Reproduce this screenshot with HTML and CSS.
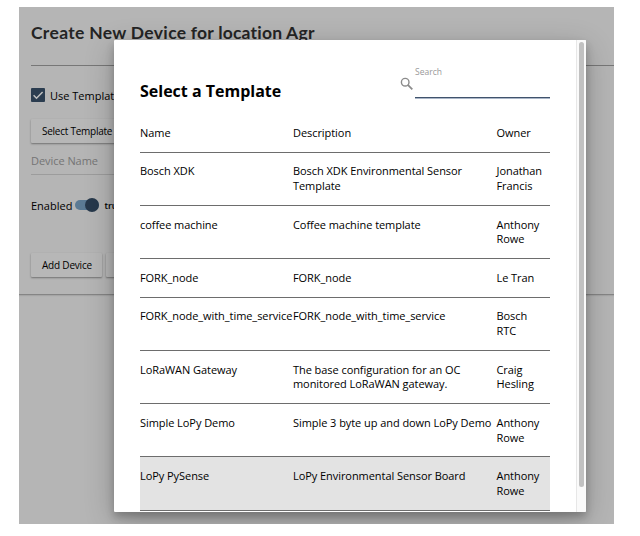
FILE: index.html
```html
<!DOCTYPE html>
<html lang="en">
<head>
<meta charset="utf-8">
<title>Create New Device</title>
<link rel="stylesheet" href="styles.css">
</head>
<body>
<div class="screen">
  <main class="page">
    <h1 class="page-title">Create New Device<span class="title-rest"> for location Agr</span></h1>
    <label class="check-row">
      <svg class="checkbox" viewBox="0 0 14 14"><rect width="14" height="14" rx="1" fill="#2b3d50"/><path d="M2.6 7.3 5.5 10.2 11.6 4" fill="none" stroke="#c0c0c0" stroke-width="1.5"/></svg>
      <span>Use Template</span>
    </label>
    <div class="buttons"><span class="button button-select">Select Template</span></div>
    <div class="field">Device Name</div>
    <div class="toggle-row">
      <span>Enabled</span>
      <span class="toggle"><span class="knob"></span></span>
      <span class="toggle-value">true</span>
    </div>
    <div class="buttons actions"><span class="button button-add">Add Device</span><span class="button button-cancel">Cancel</span></div>
  </main>
  <section class="dialog">
    <div class="content">
      <header class="dialog-header">
        <h2>Select a Template</h2>
        <div class="search">
          <svg class="search-icon" viewBox="0 0 14 14" fill="none" stroke="#8b8b8b"><circle cx="5.2" cy="5.2" r="3.8" stroke-width="1.4"/><path d="M8.1 8.1 12.3 12.3" stroke-width="1.8"/></svg>
          <div class="search-field">Search</div>
        </div>
      </header>
      <div class="row head"><span>Name</span><span>Description</span><span>Owner</span></div>
      <div class="row"><span>Bosch XDK</span><span>Bosch XDK Environmental Sensor Template</span><span>Jonathan Francis</span></div>
      <div class="row"><span>coffee machine</span><span>Coffee machine template</span><span>Anthony Rowe</span></div>
      <div class="row"><span>FORK_node</span><span>FORK_node</span><span>Le Tran</span></div>
      <div class="row"><span>FORK_node_with_time_service</span><span>FORK_node_with_time_service</span><span>Bosch<br>RTC</span></div>
      <div class="row"><span>LoRaWAN Gateway</span><span>The base configuration for an OC<br>monitored LoRaWAN gateway.</span><span>Craig Hesling</span></div>
      <div class="row"><span>Simple LoPy Demo</span><span class="single">Simple 3 byte up and down LoPy Demo</span><span>Anthony Rowe</span></div>
      <div class="row selected"><span>LoPy PySense</span><span>LoPy Environmental Sensor Board</span><span>Anthony Rowe</span></div>
    </div>
    <div class="scrollbar"><div class="thumb"></div></div>
  </section>
</div>
</body>
</html>
```

FILE: styles.css
```css
* { box-sizing: border-box; }
body {
  margin: 0;
  background: #fff;
  font: 11px/15px "Open Sans", "Noto Sans", sans-serif;
  color: #000;
  overflow: hidden;
}
.screen {
  position: relative;
  width: 595px;
  height: 517px;
  margin: 7px 0 0 19px;
  background: #b5b5b5;
  overflow: hidden;
}
.page {
  height: 288px;
  padding: 14px 0 0 12px;
  border-bottom: 1px solid #858585;
  box-shadow: 0 1px 1px #a5a5a5;
}
.page-title {
  margin: 0;
  height: 45px;
  border-bottom: 1px solid #777;
  font: 700 17.5px/24px Lato, sans-serif;
  letter-spacing: .32px;
  color: #242424;
  white-space: nowrap;
}
.title-rest { letter-spacing: .2px; }
.check-row {
  display: flex;
  align-items: center;
  gap: 5px;
  height: 18px;
  margin-top: 20px;
}
.checkbox { width: 14px; height: 14px; }
.buttons {
  display: flex;
  gap: 4px;
  margin-top: 15px;
}
.button {
  height: 24px;
  padding: 0 0 0 11px;
  border-radius: 1px;
  background: #b7b7b7;
  box-shadow: 0 1px 2px rgba(0, 0, 0, .38);
  font-size: 10px;
  letter-spacing: -.2px;
  line-height: 24px;
  white-space: nowrap;
}
.button-select { width: 100px; letter-spacing: -.25px; }
.button-add { width: 71px; }
.button-cancel { width: 71px; }
.field {
  width: 220px;
  height: 32px;
  padding-top: 10px;
  border-bottom: 1px solid #9c9c9c;
  color: #747474;
  letter-spacing: -.05px;
}
.toggle-row {
  display: flex;
  align-items: center;
  height: 18px;
  margin-top: 21px;
}
.toggle {
  display: flex;
  justify-content: flex-end;
  align-items: center;
  width: 24px;
  height: 10px;
  margin-left: 3px;
  border-radius: 5px;
  background: #5b7a94;
}
.knob {
  flex: none;
  width: 14px;
  height: 14px;
  border-radius: 50%;
  background: #26384b;
}
.toggle-value { margin-left: 5px; font-size: 9px; font-weight: 600; }
.actions { margin-top: 39px; }
.dialog {
  position: absolute;
  left: 95px;
  top: 33px;
  display: flex;
  width: 472px;
  height: 472px;
  background: #fff;
  overflow: hidden;
  border-radius: 1px;
}
.screen::after {
  content: "";
  position: absolute;
  left: 95px;
  top: 33px;
  width: 472px;
  height: 472px;
  border-radius: 1px;
  box-shadow: 0 5px 8px rgba(0, 0, 0, .22), 0 8px 30px rgba(0, 0, 0, .24);
}
.content { width: 462px; padding: 24px 26px 0; }
.dialog-header {
  display: flex;
  justify-content: space-between;
  height: 59px;
}
h2 { margin: 16px 0 0; font-size: 16px; line-height: 22px; color: #000; }
.search { display: flex; gap: 1px; height: 34px; }
.search-icon { width: 14px; height: 14px; margin-top: 13px; }
.search-field {
  width: 135px;
  border-bottom: 1.5px solid #40536c;
  box-shadow: 0 1px 0 #aab6c8;
  color: #999;
  font-size: 8.5px;
  line-height: 15px;
}
.row {
  display: grid;
  grid-template-columns: 153px 203.5px 53.5px;
  padding: 11.8px 0 10.9px;
  border-bottom: 1px solid #6d6d6d;
  line-height: 14.8px;
  letter-spacing: -.06px;
}
.row > span:nth-child(2) { padding-right: 15px; }
.row > .single { padding-right: 0; white-space: nowrap; }
.head { height: 29.5px; padding: 3px 0 0; }
.selected { background: #e3e3e3; }
.scrollbar {
  width: 10px;
  padding: 2px 1.5px 0 2px;
  border-left: 1px solid #e7e7e7;
  background: #fafafa;
}
.thumb { width: 5px; height: 445px; border-radius: 3px; background: #c1c1c1; }
```
